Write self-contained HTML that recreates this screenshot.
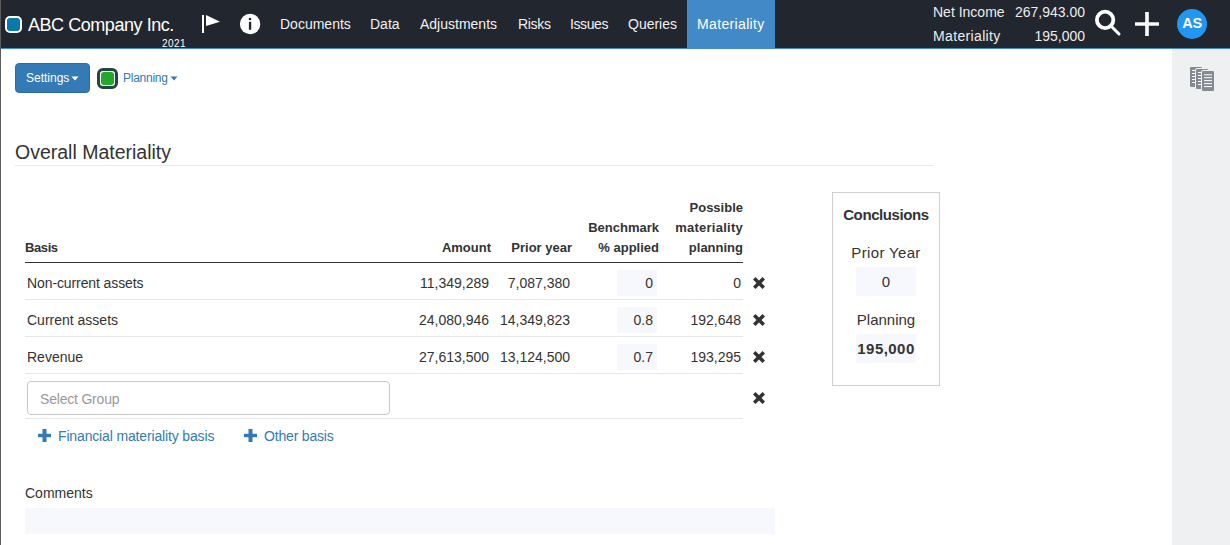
<!DOCTYPE html>
<html><head><meta charset="utf-8">
<style>
*{box-sizing:border-box;margin:0;padding:0}
html,body{width:1230px;height:545px;overflow:hidden;background:#fff;font-family:"Liberation Sans",sans-serif;color:#333}
.a{position:absolute;white-space:nowrap}
.nav{position:absolute;top:16px;font-size:14px;color:#f0f0f0;white-space:nowrap}
.ht{position:absolute;font-size:14px;color:#ececec;white-space:nowrap}
.th{position:absolute;font-size:13px;font-weight:bold;color:#333;white-space:nowrap}
.td{position:absolute;font-size:14px;color:#333;white-space:nowrap}
.rl{position:absolute;left:25px;width:718px;height:1px;background:#e7e7e7}
.inp{position:absolute;background:#f7f8fd}
.x{position:absolute;width:12px;height:12px}
.r{text-align:right}
.c{text-align:center}
</style></head><body>
<!-- header -->
<div class="a" style="left:0;top:0;width:1230px;height:48px;background:#22262e"></div>
<div class="a" style="left:0;top:48px;width:1230px;height:1px;background:#3f8ad0"></div>
<div class="a" style="left:0;top:0;width:1px;height:545px;background:#5c5c5c;z-index:5"></div>

<div class="a" style="left:5px;top:16px;width:17px;height:17px;border:2px solid #fff;border-radius:5px;background:#0a78ab"></div>
<div class="a" style="left:28px;top:15px;font-size:18px;letter-spacing:-0.45px;color:#fff">ABC Company Inc.</div>
<div class="a" style="left:162px;top:38px;font-size:10px;letter-spacing:0.4px;color:#fff">2021</div>

<svg class="a" style="left:200px;top:12px" width="24" height="24" viewBox="0 0 24 24">
<rect x="2" y="3" width="2" height="18" fill="#fff"/>
<path d="M6 3 L20 9.7 L6 14 Z" fill="#fff"/>
</svg>
<svg class="a" style="left:239px;top:13px" width="22" height="22" viewBox="0 0 22 22">
<circle cx="11.1" cy="11" r="10.2" fill="#fff"/>
<circle cx="11" cy="6" r="1.3" fill="#22262e"/>
<rect x="9.9" y="8.8" width="2.3" height="8" fill="#22262e"/>
</svg>

<div class="nav" style="left:280px">Documents</div>
<div class="nav" style="left:370px">Data</div>
<div class="nav" style="left:420px">Adjustments</div>
<div class="nav" style="left:518px;letter-spacing:-0.3px">Risks</div>
<div class="nav" style="left:570px;letter-spacing:-0.4px">Issues</div>
<div class="nav" style="left:628px">Queries</div>
<div class="a" style="left:687px;top:0;width:88px;height:48px;background:#4189c7"></div>
<div class="nav" style="left:697px;color:#fff;letter-spacing:0.35px">Materiality</div>

<div class="ht" style="left:933px;top:4px">Net Income</div>
<div class="ht r" style="left:985px;width:100px;top:4px">267,943.00</div>
<div class="ht" style="left:933px;top:28px;letter-spacing:0.35px">Materiality</div>
<div class="ht r" style="left:985px;width:100px;top:28px">195,000</div>

<svg class="a" style="left:1090px;top:5px" width="36" height="36" viewBox="0 0 36 36">
<circle cx="15.1" cy="14.9" r="8.2" fill="none" stroke="#fff" stroke-width="3.8"/>
<line x1="21.5" y1="21.5" x2="29" y2="29" stroke="#fff" stroke-width="3" stroke-linecap="round"/>
</svg>
<svg class="a" style="left:1133px;top:10px" width="28" height="28" viewBox="0 0 28 28">
<rect x="12.2" y="2" width="3.6" height="24" fill="#fff"/>
<rect x="2" y="12.3" width="24" height="3.4" fill="#fff"/>
</svg>
<div class="a c" style="left:1177px;top:9px;width:30px;height:30px;border-radius:50%;background:#2196f3"></div>
<div class="a c" style="left:1177px;top:15px;width:30px;font-size:14.5px;font-weight:bold;color:#fff;letter-spacing:-0.2px">AS</div>

<!-- right sidebar -->
<div class="a" style="left:1172px;top:49px;width:58px;height:496px;background:#eff0f2"></div>
<svg class="a" style="left:1188px;top:65px" width="28" height="28" viewBox="0 0 28 28">
<g fill="#858a92">
<rect x="2" y="2" width="12" height="20" rx="1"/>
</g>
<g fill="#fff">
<rect x="4" y="5" width="6" height="1"/><rect x="4" y="8" width="6" height="1"/><rect x="4" y="11" width="6" height="1"/><rect x="4" y="14" width="6" height="1"/><rect x="4" y="17" width="6" height="1"/>
</g>
<rect x="7.5" y="3.5" width="13" height="21" rx="1.5" fill="#858a92" stroke="#eff0f2" stroke-width="1"/>
<g fill="#fff">
<rect x="10" y="7" width="6" height="1"/><rect x="10" y="10" width="6" height="1"/><rect x="10" y="13" width="6" height="1"/><rect x="10" y="16" width="6" height="1"/><rect x="10" y="19" width="6" height="1"/>
</g>
<rect x="13.5" y="5.5" width="13" height="21" rx="1.5" fill="#858a92" stroke="#eff0f2" stroke-width="1"/>
<g fill="#fff">
<rect x="16" y="9.3" width="8" height="1"/><rect x="16" y="12.2" width="8" height="1"/><rect x="16" y="15.1" width="8" height="1"/><rect x="16" y="18.1" width="8" height="1"/><rect x="16" y="21.1" width="8" height="1"/>
</g>
</svg>

<!-- toolbar -->
<div class="a" style="left:15px;top:63px;width:75px;height:30px;background:#337ab7;border:1px solid #2e6da4;border-radius:4px"></div>
<div class="a" style="left:26px;top:71px;font-size:12px;color:#fff">Settings</div>
<svg class="a" style="left:71px;top:76px" width="8" height="5" viewBox="0 0 8 5"><path d="M0.5 0.5 L7.5 0.5 L4 4.5 Z" fill="#fff"/></svg>
<div class="a" style="left:97px;top:68px;width:21px;height:21px;border:3px solid #244640;border-radius:6px;background:#fff"></div>
<div class="a" style="left:101px;top:72px;width:13px;height:13px;border-radius:3px;background:#22a82a"></div>
<div class="a" style="left:123px;top:71px;font-size:12px;color:#337ab7;letter-spacing:-0.25px">Planning</div>
<svg class="a" style="left:170px;top:76px" width="8" height="5" viewBox="0 0 8 5"><path d="M0.5 0.5 L7.5 0.5 L4 4.5 Z" fill="#337ab7"/></svg>

<!-- title -->
<div class="a" style="left:15px;top:141px;font-size:19.5px;color:#333">Overall Materiality</div>
<div class="a" style="left:15px;top:165px;width:918px;height:1px;background:#e8e8e8"></div>

<!-- table header -->
<div class="th" style="left:25px;top:240px;letter-spacing:-0.4px">Basis</div>
<div class="th r" style="left:391px;width:100px;top:240px">Amount</div>
<div class="th r" style="left:472px;width:100px;top:240px">Prior year</div>
<div class="th r" style="left:559px;width:100px;top:220px">Benchmark</div>
<div class="th r" style="left:559px;width:100px;top:240px">% applied</div>
<div class="th r" style="left:643px;width:100px;top:200px">Possible</div>
<div class="th r" style="left:643px;width:100px;top:220px;letter-spacing:0.25px">materiality</div>
<div class="th r" style="left:643px;width:100px;top:240px">planning</div>
<div class="a" style="left:25px;top:262px;width:718px;height:1px;background:#333"></div>

<!-- rows -->
<div class="td" style="left:27px;top:275px;letter-spacing:-0.1px">Non-current assets</div>
<div class="td r" style="left:389px;width:100px;top:275px">11,349,289</div>
<div class="td r" style="left:470px;width:100px;top:275px">7,087,380</div>
<div class="inp" style="left:617px;top:270px;width:40px;height:26px"></div>
<div class="td r" style="left:553px;width:100px;top:275px">0</div>
<div class="td r" style="left:641px;width:100px;top:275px">0</div>
<div class="rl" style="top:299px"></div>

<div class="td" style="left:27px;top:312px">Current assets</div>
<div class="td r" style="left:389px;width:100px;top:312px">24,080,946</div>
<div class="td r" style="left:470px;width:100px;top:312px">14,349,823</div>
<div class="inp" style="left:617px;top:307px;width:40px;height:26px"></div>
<div class="td r" style="left:553px;width:100px;top:312px">0.8</div>
<div class="td r" style="left:641px;width:100px;top:312px">192,648</div>
<div class="rl" style="top:336px"></div>

<div class="td" style="left:27px;top:349px">Revenue</div>
<div class="td r" style="left:389px;width:100px;top:349px">27,613,500</div>
<div class="td r" style="left:470px;width:100px;top:349px">13,124,500</div>
<div class="inp" style="left:617px;top:344px;width:40px;height:26px"></div>
<div class="td r" style="left:553px;width:100px;top:349px">0.7</div>
<div class="td r" style="left:641px;width:100px;top:349px">193,295</div>
<div class="rl" style="top:373px"></div>

<div class="a" style="left:27px;top:381px;width:363px;height:34px;border:1px solid #c8c8c8;border-radius:4px"></div>
<div class="td" style="left:40px;top:391px;color:#999;letter-spacing:-0.2px">Select Group</div>
<div class="rl" style="top:418px"></div>

<svg class="x" style="left:753px;top:277px" viewBox="0 0 12 12"><path d="M0 2.5L2.5 0L6 3.5L9.5 0L12 2.5L8.5 6L12 9.5L9.5 12L6 8.5L2.5 12L0 9.5L3.5 6Z" fill="#333"/></svg>
<svg class="x" style="left:753px;top:314px" viewBox="0 0 12 12"><path d="M0 2.5L2.5 0L6 3.5L9.5 0L12 2.5L8.5 6L12 9.5L9.5 12L6 8.5L2.5 12L0 9.5L3.5 6Z" fill="#333"/></svg>
<svg class="x" style="left:753px;top:351px" viewBox="0 0 12 12"><path d="M0 2.5L2.5 0L6 3.5L9.5 0L12 2.5L8.5 6L12 9.5L9.5 12L6 8.5L2.5 12L0 9.5L3.5 6Z" fill="#333"/></svg>
<svg class="x" style="left:753px;top:392px" viewBox="0 0 12 12"><path d="M0 2.5L2.5 0L6 3.5L9.5 0L12 2.5L8.5 6L12 9.5L9.5 12L6 8.5L2.5 12L0 9.5L3.5 6Z" fill="#333"/></svg>

<!-- links -->
<svg class="a" style="left:38px;top:429px" width="13" height="13" viewBox="0 0 13 13"><rect x="4.5" y="0" width="4" height="13" fill="#337ab7"/><rect x="0" y="4.8" width="13" height="3.4" fill="#337ab7"/></svg>
<div class="td" style="left:58px;top:428px;color:#337ab7;letter-spacing:-0.15px">Financial materiality basis</div>
<svg class="a" style="left:244px;top:429px" width="13" height="13" viewBox="0 0 13 13"><rect x="4.5" y="0" width="4" height="13" fill="#337ab7"/><rect x="0" y="4.8" width="13" height="3.4" fill="#337ab7"/></svg>
<div class="td" style="left:264px;top:428px;color:#337ab7;letter-spacing:-0.18px">Other basis</div>

<!-- comments -->
<div class="td" style="left:25px;top:485px">Comments</div>
<div class="a" style="left:25px;top:508px;width:750px;height:26px;background:#f7f8fd"></div>

<!-- conclusions -->
<div class="a" style="left:832px;top:192px;width:108px;height:194px;border:1px solid #cfcfcf"></div>
<div class="a c" style="left:832px;top:206px;width:108px;font-size:15px;font-weight:bold;letter-spacing:-0.4px">Conclusions</div>
<div class="a c" style="left:832px;top:244px;width:108px;font-size:15px;letter-spacing:0.35px">Prior Year</div>
<div class="inp" style="left:856px;top:267px;width:60px;height:29px"></div>
<div class="a c" style="left:832px;top:273px;width:108px;font-size:15px">0</div>
<div class="a c" style="left:832px;top:311px;width:108px;font-size:15px">Planning</div>
<div class="inp" style="left:856px;top:334px;width:60px;height:29px"></div>
<div class="a c" style="left:832px;top:340px;width:108px;font-size:15px;font-weight:bold;letter-spacing:0.45px">195,000</div>
</body></html>
